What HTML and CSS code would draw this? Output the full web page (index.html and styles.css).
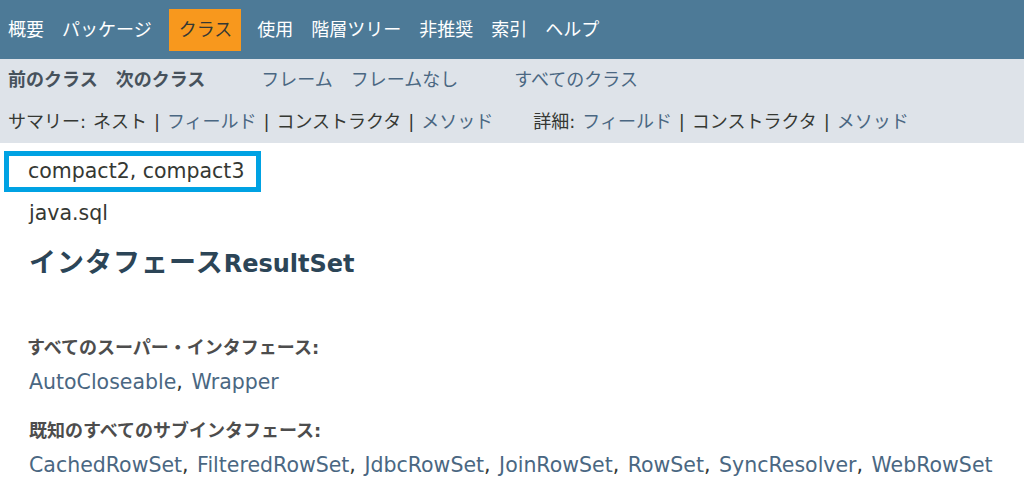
FILE: index.html
```html
<!DOCTYPE html>
<html lang="ja">
<head>
<meta charset="utf-8">
<title>ResultSet</title>
<link rel="stylesheet" href="styles.css">
</head>
<body>
<header class="topnav">
  <ul class="navlist">
    <li>概要</li>
    <li>パッケージ</li>
    <li class="active">クラス</li>
    <li>使用</li>
    <li>階層ツリー</li>
    <li>非推奨</li>
    <li>索引</li>
    <li>ヘルプ</li>
  </ul>
</header>
<nav class="subnav">
  <div class="row">
    <ul class="group">
      <li class="dis">前のクラス</li>
      <li class="dis">次のクラス</li>
    </ul>
    <ul class="group">
      <li><a>フレーム</a></li>
      <li><a>フレームなし</a></li>
    </ul>
    <ul class="group">
      <li><a>すべてのクラス</a></li>
    </ul>
  </div>
  <div class="row row2">
    <div class="sublist">サマリー: ネスト | <a>フィールド</a> | コンストラクタ | <a>メソッド</a></div>
    <div class="sublist">詳細: <a>フィールド</a> | コンストラクタ | <a>メソッド</a></div>
  </div>
</nav>
<main class="content">
  <div class="profile">compact2, compact3</div>
  <div class="pkg">java.sql</div>
  <h2 class="title"><span class="jp">インタフェース</span>ResultSet</h2>
  <dl class="desc">
    <dt>すべてのスーパー・インタフェース:</dt>
    <dd><a>AutoCloseable</a>, <a>Wrapper</a></dd>
    <dt class="second">既知のすべてのサブインタフェース:</dt>
    <dd><a>CachedRowSet</a>, <a>FilteredRowSet</a>, <a>JdbcRowSet</a>, <a>JoinRowSet</a>, <a>RowSet</a>, <a>SyncResolver</a>, <a>WebRowSet</a></dd>
  </dl>
</main>
</body>
</html>
```

FILE: styles.css
```css
html, body {
  margin: 0;
  padding: 0;
  background: #ffffff;
}
body {
  font-family: "DejaVu Sans", "Noto Sans CJK JP", sans-serif;
  font-size: 18px;
  color: #353833;
  overflow: hidden;
}
a {
  color: #4a6782;
  text-decoration: none;
}
ul {
  list-style: none;
  margin: 0;
  padding: 0;
}

/* top navigation */
.topnav {
  background: #4d7a97;
  height: 59px;
  box-sizing: border-box;
  padding-top: 9px;
}
.navlist {
  display: flex;
  margin-left: -1px;
}
.navlist li {
  padding: 9px 9px;
  line-height: 24px;
  color: #ffffff;
}
.navlist li.active {
  background: #f8981d;
  color: #353833;
  padding: 9px 9px 9px 10px;
  margin: 0 7px 0 8px;
}

/* sub navigation */
.subnav {
  background: #dee3e9;
  height: 84px;
  box-sizing: border-box;
  padding: 8px 0;
}
.row {
  display: flex;
  line-height: 26px;
  white-space: nowrap;
}
.group {
  display: flex;
  margin-right: 38px;
}
.group:first-child {
  margin-left: -1px;
}
.group li {
  padding: 0 9px;
}
.group li.dis {
  font-weight: bold;
  color: #47525c;
}
.row2 {
  margin-top: 16px;
  padding-left: 8px;
  word-spacing: 1.2px;
}
.sublist {
  margin-right: 40px;
}

/* content */
.content {
  padding: 8px 4px 0;
}
.profile {
  width: fit-content;
  border: 5px solid #00a2e3;
  padding: 0 12px 0 19px;
  line-height: 31px;
  font-size: 20.5px;
}
.pkg {
  margin-top: 5px;
  padding-left: 25px;
  line-height: 32px;
  font-size: 20.5px;
}
.title {
  margin: 18px 0 0;
  padding-left: 25px;
  line-height: 32px;
  font-size: 24px;
  font-weight: bold;
  color: #2c4557;
}
.title .jp {
  font-size: 27px;
  letter-spacing: 1px;
}
.desc {
  margin: 0;
}
.desc dt {
  margin-top: 55px;
  padding-left: 23px;
  line-height: 26px;
  font-weight: bold;
  color: #4d4d4d;
}
.desc dt.second {
  margin-top: 22px;
  padding-left: 25px;
}
.desc dd {
  margin: 7px 0 0;
  padding-left: 25px;
  line-height: 28px;
  font-size: 20.5px;
  word-spacing: 2px;
  white-space: nowrap;
}
```
